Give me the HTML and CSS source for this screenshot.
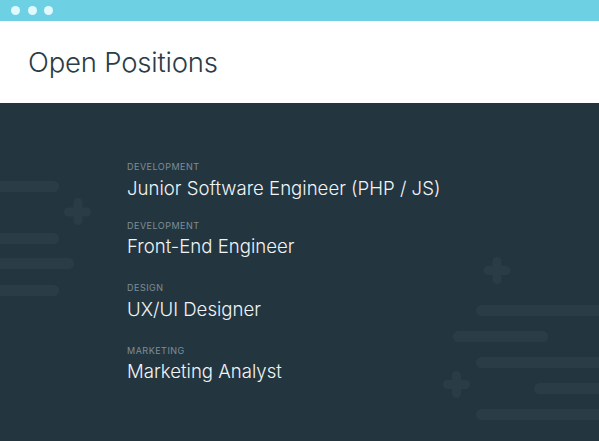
FILE: index.html
```html
<!DOCTYPE html>
<html lang="en">
<head>
<meta charset="utf-8">
<title>Open Positions</title>
<link rel="stylesheet" href="styles.css">
</head>
<body>
<div class="window">
  <div class="titlebar">
    <span class="dot"></span>
    <span class="dot"></span>
    <span class="dot"></span>
  </div>
  <header class="header">
    <h1 class="header-title">Open Positions</h1>
  </header>
  <main class="content">
    <svg class="decor" width="599" height="338" viewBox="0 0 599 338" aria-hidden="true">
      <g fill="#2a3d47">
        <rect x="-20" y="78" width="79" height="11" rx="5.5"/>
        <rect x="-20" y="130" width="79" height="11" rx="5.5"/>
        <rect x="-20" y="155" width="94" height="11" rx="5.5"/>
        <rect x="-20" y="182" width="79" height="11" rx="5.5"/>
        <rect x="64" y="104.5" width="27" height="9" rx="4.5"/>
        <rect x="73.5" y="95" width="9" height="27" rx="4.5"/>

        <rect x="483.5" y="163" width="27" height="9" rx="4.5"/>
        <rect x="492.5" y="154" width="9" height="27" rx="4.5"/>
        <rect x="476" y="202" width="150" height="11" rx="5.5"/>
        <rect x="453" y="228" width="95" height="11" rx="5.5"/>
        <rect x="476" y="254" width="150" height="11" rx="5.5"/>
        <rect x="534" y="280" width="100" height="11" rx="5.5"/>
        <rect x="476" y="306" width="150" height="11" rx="5.5"/>
        <rect x="443" y="277" width="27" height="9" rx="4.5"/>
        <rect x="452" y="268" width="9" height="27" rx="4.5"/>
      </g>
    </svg>
    <ul class="jobs">
      <li class="job">
        <div class="job-category">Development</div>
        <div class="job-title">Junior Software Engineer (PHP / JS)</div>
      </li>
      <li class="job">
        <div class="job-category">Development</div>
        <div class="job-title">Front-End Engineer</div>
      </li>
      <li class="job">
        <div class="job-category">Design</div>
        <div class="job-title">UX/UI Designer</div>
      </li>
      <li class="job">
        <div class="job-category">Marketing</div>
        <div class="job-title">Marketing Analyst</div>
      </li>
    </ul>
  </main>
</div>
</body>
</html>
```

FILE: styles.css
```css
* {
  box-sizing: border-box;
}

html, body {
  margin: 0;
  padding: 0;
}

body {
  font-family: Inter, "Noto Sans", "Liberation Sans", sans-serif;
  background: #233640;
}

.window {
  width: 599px;
  height: 441px;
  display: flex;
  flex-direction: column;
  overflow: hidden;
}

.titlebar {
  height: 21px;
  flex: 0 0 21px;
  background: #6ed1e3;
  display: flex;
  align-items: center;
  gap: 7.5px;
  padding-left: 11px;
}

.dot {
  width: 9px;
  height: 9px;
  border-radius: 50%;
  background: #dff9ff;
}

.header {
  height: 82px;
  flex: 0 0 82px;
  background: #ffffff;
  display: flex;
  align-items: center;
  padding-left: 28px;
}

.header-title {
  margin: 0;
  font-size: 27.5px;
  font-weight: 300;
  color: #2b3c46;
  letter-spacing: -0.2px;
  line-height: 32px;
}

.content {
  flex: 1;
  position: relative;
  background: #233640;
}

.decor {
  position: absolute;
  left: 0;
  top: 0;
}

.jobs {
  position: relative;
  list-style: none;
  margin: 0;
  padding: 58px 0 0 127px;
}

.job + .job {
  margin-top: 25px;
}

.job:first-child + .job {
  margin-top: 21px;
}

.job-category {
  font-size: 9px;
  line-height: 12px;
  letter-spacing: 0.5px;
  text-transform: uppercase;
  color: #7f8d95;
}

.job-title {
  margin-top: 3.5px;
  font-size: 18.6px;
  line-height: 22px;
  font-weight: 300;
  color: #f1f4f6;
}
```
